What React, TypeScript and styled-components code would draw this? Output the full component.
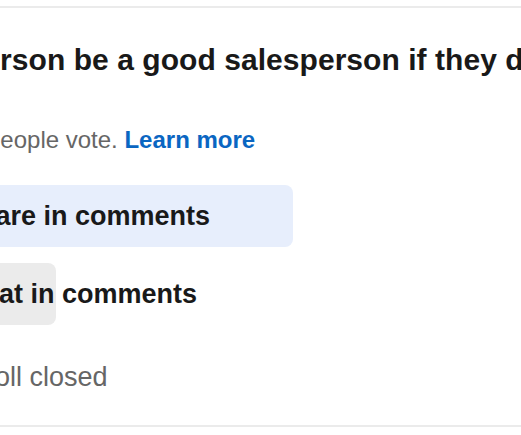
import React from "react";
import styled, { createGlobalStyle } from "styled-components";

const Global = createGlobalStyle`
  html, body { margin: 0; padding: 0; background: #ffffff; overflow: hidden; }
  body { font-family: "Liberation Sans", Arial, sans-serif; }
`;

const Card = styled.section`
  margin-top: 6px;
  border-top: 2px solid #ebebeb;
  border-bottom: 2px solid #ebebeb;
  padding: 34px 0 32px;
  display: flex;
  flex-direction: column;
  overflow: hidden;
`;

const Line = styled.div<{ $indent: number }>`
  white-space: nowrap;
  overflow: hidden;
  text-indent: ${(p) => p.$indent}px;
`;

const Question = styled(Line)`
  font-size: 30px;
  line-height: 36px;
  font-weight: 700;
  color: #191919;
  letter-spacing: 0.05px;
`;

const Notice = styled(Line)`
  margin-top: 47px;
  font-size: 24px;
  line-height: 30px;
  color: #666666;
`;

const LearnMore = styled.a`
  color: #0a66c2;
  font-weight: 700;
  text-decoration: none;
`;

const Options = styled.div`
  margin-top: 30px;
  display: flex;
  flex-direction: column;
  gap: 16px;
`;

const OptionRow = styled.div`
  position: relative;
  height: 62px;
  display: flex;
  align-items: center;
`;

const Bar = styled.div<{ $selected: boolean }>`
  position: absolute;
  left: -20px;
  top: 0;
  bottom: 0;
  border-radius: 8px;
  background: ${(p) => (p.$selected ? "#e7eefc" : "#ebebeb")};
`;

const OptionLabel = styled(Line)`
  position: relative;
  font-size: 27px;
  line-height: 32px;
  font-weight: 700;
  color: #191919;
`;

const Status = styled(Line)`
  margin-top: 36px;
  font-size: 27px;
  line-height: 32px;
  color: #666666;
`;

const options = [
  { label: "Share in comments", indent: -39, barEnd: 293, selected: true },
  { label: "Chat in comments", indent: -37, barEnd: 56, selected: false },
];

export default function App() {
  return (
    <>
      <Global />
      <Card>
        <Question $indent={-35}>
          person be a good salesperson if they don&apos;t like talking?
        </Question>
        <Notice $indent={-13}>
          people vote. <LearnMore href="#">Learn more</LearnMore>
        </Notice>
        <Options>
          {options.map((o) => (
            <OptionRow key={o.label}>
              <Bar $selected={o.selected} style={{ width: o.barEnd + 20 }} />
              <OptionLabel $indent={o.indent}>{o.label}</OptionLabel>
            </OptionRow>
          ))}
        </Options>
        <Status $indent={-23}>Poll closed</Status>
      </Card>
    </>
  );
}
